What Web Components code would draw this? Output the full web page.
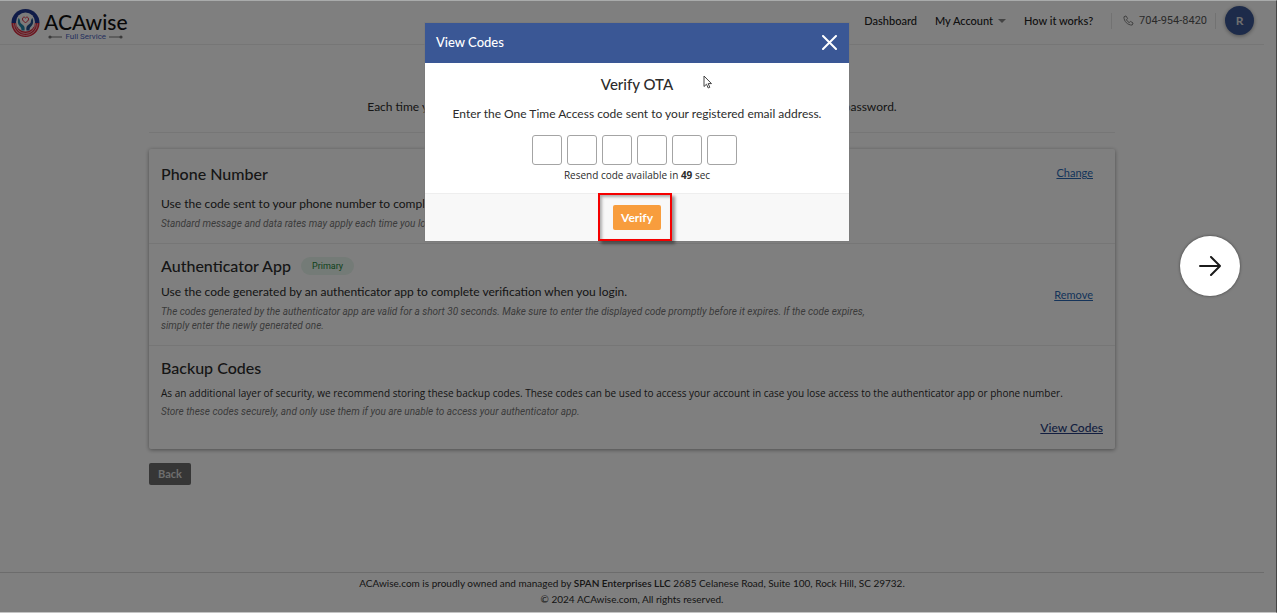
<!DOCTYPE html>
<html lang="en">
<head>
<meta charset="utf-8">
<meta name="viewport" content="width=device-width, initial-scale=1">
<title>ACAwise</title>
<style>
  body {
    --brand: #3a5795;
    --ink: #2c2c2c;
    --muted: #777;
    --line: #ececec;
    --text-font: Lato, "Open Sans", sans-serif;
    --small-font: "Open Sans", sans-serif;
    --note-font: Roboto, sans-serif;
    margin: 0;
    color: var(--ink);
    background: #fff;
    font: 12px/18px var(--text-font);
  }
</style>
</head>
<body>

<app-shell>
  <site-header></site-header>

  <account-page>
    <span slot="intro">Each time you log in, you'll need to enter a verification code along with your username and password.</span>

    <method-row heading="Phone Number" spacious>
      Use the code sent to your phone number to complete verification when you login.
      <span slot="note">Standard message and data rates may apply each time you log in.</span>
      <text-link slot="action" label="Change"></text-link>
    </method-row>

    <method-row heading="Authenticator App" badge="Primary" centered>
      Use the code generated by an authenticator app to complete verification when you login.
      <span slot="note">The codes generated by the authenticator app are valid for a short 30 seconds. Make sure to enter the displayed code promptly before it expires. If the code expires, simply enter the newly generated one.</span>
      <text-link slot="action" label="Remove"></text-link>
    </method-row>

    <method-row heading="Backup Codes" compact>
      As an additional layer of security, we recommend storing these backup codes. These codes can be used to access your account in case you lose access to the authenticator app or phone number.
      <span slot="note">Store these codes securely, and only use them if you are unable to access your authenticator app.</span>
      <text-link slot="below" label="View Codes" strong></text-link>
    </method-row>
  </account-page>

  <site-footer></site-footer>

  <modal-dialog slot="overlay" heading="View Codes">
    <otp-form></otp-form>
    <verify-button slot="footer"></verify-button>
  </modal-dialog>
  <next-button slot="overlay"></next-button>
</app-shell>

<script>
class AppShell extends HTMLElement {
  constructor() {
    super();
    this.attachShadow({ mode: 'open' });
    this.shadowRoot.innerHTML = `
      <style>
        :host {
          display: block;
          position: relative;
          box-sizing: border-box;
          min-height: 100vh;
          border: 1px solid #a9abab;
          border-left: 0;
          border-right-color: #454545;
          border-bottom-color: #c4c4c4;
        }
        .page {
          display: flex;
          flex-direction: column;
          box-sizing: border-box;
          min-height: calc(100vh - 2px);
          padding-right: 12px;
        }
        .backdrop {
          position: absolute;
          inset: 0;
          padding-right: 2px;
          background: rgba(0, 0, 0, 0.5);
        }
      </style>
      <div class="page"><slot></slot></div>
      <div class="backdrop"><slot name="overlay"></slot></div>
    `;
  }
}

class SiteLogo extends HTMLElement {
  constructor() {
    super();
    this.attachShadow({ mode: 'open' });
    this.shadowRoot.innerHTML = `
      <style>
        :host { display: block; }
        a {
          display: flex;
          align-items: center;
          gap: 4px;
          color: #111;
          text-decoration: none;
        }
        svg { display: block; }
        .words {
          display: flex;
          flex-direction: column;
          align-items: center;
          padding-top: 9px;
        }
        .name { font-size: 21px; line-height: 20px; font-weight: 500; }
        .tag {
          display: flex;
          align-items: center;
          gap: 3px;
          color: #4a5fc0;
          font: 8px/10px var(--note-font);
        }
      </style>
      <a href="#">
        <svg width="29" height="29" viewBox="0 0 58 58" aria-hidden="true">
          <circle cx="29" cy="29" r="28" fill="#f4f4f4"/>
          <path d="M1 30a28 28 0 0 1 56 0z" fill="#1f3690"/>
          <path d="M1 30a28 28 0 0 0 56 0z" fill="#d8283c"/>
          <g fill="none" stroke="#f4d8dc" stroke-width="1.5">
            <path d="M5 31a24 24 0 0 0 48 0"/>
            <path d="M9 31a20 20 0 0 0 40 0"/>
          </g>
          <circle cx="29" cy="28" r="19" fill="#f7f7f7"/>
          <path d="M15 20c3 1 3 7 4 10l6 5c2 2 3 5 2 10h-6c0-4-1-6-4-9-4-4-4-10-2-16z" fill="#2385a8"/>
          <path d="M43 20c-3 1-3 7-4 10l-6 5c-2 2-3 5-2 10h6c0-4 1-6 4-9 4-4 4-10 2-16z" fill="#25508f"/>
          <path d="M29 29c-4-2-6-4-6-7 0-4 4-5 6-2 2-3 6-2 6 2 0 3-2 5-6 7z" fill="#fff" stroke="#d8283c" stroke-width="2"/>
        </svg>
        <span class="words">
          <span class="name">ACAwise</span>
          <span class="tag">
            <svg width="14" height="4" viewBox="0 0 14 4" fill="#777"><circle cx="2" cy="2" r="1.6"/><path d="M2 1.5h12v1H2z"/></svg>
            Full Service
            <svg width="14" height="4" viewBox="0 0 14 4" fill="#777"><circle cx="12" cy="2" r="1.6"/><path d="M0 1.5h12v1H0z"/></svg>
          </span>
        </span>
      </a>
    `;
  }
}

class SiteHeader extends HTMLElement {
  constructor() {
    super();
    this.attachShadow({ mode: 'open' });
    this.shadowRoot.innerHTML = `
      <style>
        :host { display: block; }
        header {
          display: flex;
          align-items: center;
          justify-content: space-between;
          box-sizing: border-box;
          height: 44px;
          padding: 0 10px 0 11px;
          border-bottom: 1px solid var(--line);
        }
        nav { display: flex; align-items: center; gap: 18px; padding-bottom: 4px; }
        nav a { color: #222; font-size: 11px; font-weight: 500; text-decoration: none; }
        .menu { display: flex; align-items: center; gap: 5px; }
        .caret {
          border: 4px solid transparent;
          border-top-color: #888;
          border-bottom: 0;
        }
        .phone {
          display: flex;
          align-items: center;
          gap: 5px;
          height: 16px;
          padding: 0 8px 0 11px;
          border: solid #e4e4e4;
          border-width: 0 1px;
          color: #555;
          font: 11px/16px var(--note-font);
        }
        .user { display: flex; align-items: center; gap: 9px; }
        .avatar {
          width: 29px;
          height: 29px;
          padding: 0;
          border: 0;
          border-radius: 50%;
          background: var(--brand);
          box-shadow: 0 1px 4px rgba(0, 0, 0, 0.4);
          color: #ddd;
          font: bold 12px/29px var(--text-font);
        }
      </style>
      <header>
        <site-logo></site-logo>
        <nav>
          <a href="#">Dashboard</a>
          <a href="#" class="menu">My Account <span class="caret"></span></a>
          <a href="#">How it works?</a>
          <div class="user">
            <a href="tel:7049548420" class="phone">
              <svg width="11" height="11" viewBox="0 0 24 24" fill="none" stroke="#777" stroke-width="2" stroke-linejoin="round" aria-hidden="true">
                <path d="M6.5 2 2 4c0 10 8 18 18 18l2-4.500-5.500-3.500-3 2.500c-2.500-1.200-4.500-3.200-6-6L10 7.500z"/>
              </svg>
              704-954-8420
            </a>
            <button class="avatar" type="button">R</button>
          </div>
        </nav>
      </header>
    `;
  }
}

class AccountPage extends HTMLElement {
  constructor() {
    super();
    this.attachShadow({ mode: 'open' });
    this.shadowRoot.innerHTML = `
      <style>
        :host { display: block; flex: 1; }
        main {
          max-width: 966px;
          margin: 0 auto;
          padding-top: 53px;
        }
        .intro {
          margin: 0 0 16px;
          padding-bottom: 16px;
          border-bottom: 1px solid var(--line);
          text-align: center;
        }
        .card {
          padding-top: 3px;
          border-radius: 2px;
          box-shadow: 0 1px 4px rgba(0, 0, 0, 0.4);
        }
        .back {
          height: 22px;
          margin-top: 14px;
          padding: 0 9px;
          border: 0;
          border-radius: 2px;
          background: #6c6c6c;
          color: #ddd;
          font: bold 11px/22px var(--text-font);
        }
      </style>
      <main>
        <p class="intro"><slot name="intro"></slot></p>
        <div class="card"><slot></slot></div>
        <button class="back" type="button">Back</button>
      </main>
    `;
  }
}

class MethodRow extends HTMLElement {
  constructor() {
    super();
    this.attachShadow({ mode: 'open' });
    const badge = this.getAttribute('badge');
    this.shadowRoot.innerHTML = `
      <style>
        :host {
          display: flex;
          justify-content: space-between;
          padding: 12px 22px 12px 12px;
          border-bottom: 1px solid var(--line);
        }
        :host(:last-of-type) { border-bottom: 0; }
        :host([centered]) { align-items: center; }
        :host([compact]) { padding-right: 12px; }
        .info { max-width: 720px; }
        :host([compact]) .info { flex: 1; max-width: none; }
        .title { display: flex; align-items: center; gap: 10px; height: 20px; margin-bottom: 7px; }
        :host([spacious]) .title { margin-bottom: 11px; }
        h2 { margin: 0; font-size: 16px; line-height: 20px; font-weight: 500; }
        .badge {
          padding: 0 11px;
          border-radius: 9px;
          background: #e9f6ee;
          color: #1c8438;
          font: 9px/18px var(--note-font);
        }
        p { margin: 0 0 4px; }
        :host([compact]) p { font: 10px/16px var(--small-font); }
        .note {
          color: var(--muted);
          font: italic 10px/14px var(--note-font);
        }
        .below { display: flex; justify-content: flex-end; }
      </style>
      <div class="info">
        <div class="title">
          <h2>${this.getAttribute('heading')}</h2>
          ${badge ? `<span class="badge">${badge}</span>` : ''}
        </div>
        <p><slot></slot></p>
        <div class="note"><slot name="note"></slot></div>
        <div class="below"><slot name="below"></slot></div>
      </div>
      <slot name="action"></slot>
    `;
  }
}

class TextLink extends HTMLElement {
  constructor() {
    super();
    this.attachShadow({ mode: 'open' });
    this.shadowRoot.innerHTML = `
      <style>
        :host { display: block; }
        a { color: #2a68b4; font-size: 11px; line-height: 16px; text-decoration: underline; }
        :host([strong]) a { color: #263c80; font-size: 12px; line-height: 18px; font-weight: 500; }
      </style>
      <a href="#">${this.getAttribute('label')}</a>
    `;
  }
}

class SiteFooter extends HTMLElement {
  constructor() {
    super();
    this.attachShadow({ mode: 'open' });
    this.shadowRoot.innerHTML = `
      <style>
        :host { display: block; }
        footer {
          padding: 2px 0 5px;
          border-top: 1px solid #d8d8d8;
          font-size: 10px;
          line-height: 16px;
          text-align: center;
        }
        b { font-weight: 600; }
      </style>
      <footer>
        <div>ACAwise.com is proudly owned and managed by <b>SPAN Enterprises LLC</b> 2685 Celanese Road, Suite 100, Rock Hill, SC 29732.</div>
        <div>© 2024 ACAwise.com, All rights reserved.</div>
      </footer>
    `;
  }
}

class ModalDialog extends HTMLElement {
  constructor() {
    super();
    this.attachShadow({ mode: 'open' });
    this.shadowRoot.innerHTML = `
      <style>
        :host {
          display: block;
          position: relative;
          max-width: 424px;
          margin: 22px auto 0;
          background: #fff;
          outline: 1px solid rgba(120, 120, 120, 0.6);
        }
        header {
          display: flex;
          align-items: center;
          justify-content: space-between;
          box-sizing: border-box;
          height: 40px;
          padding: 0 12px 2px 11px;
          background: var(--brand);
          color: #fff;
        }
        h1 { margin: 0; font-size: 13px; line-height: 18px; font-weight: 500; }
        .close { display: flex; padding: 0; border: 0; background: none; }
        .body { padding: 11px 12px; }
        footer {
          display: flex;
          justify-content: center;
          box-sizing: border-box;
          height: 48px;
          border-top: 1px solid #eee;
          background: #f8f8f8;
        }
        .pointer { position: absolute; left: 278px; top: 52px; }
      </style>
      <header>
        <h1>${this.getAttribute('heading')}</h1>
        <button class="close" type="button" aria-label="Close">
          <svg width="15" height="15" viewBox="0 0 15 15" stroke="#fff" stroke-width="2" stroke-linecap="round"><path d="M1 1l13 13M14 1 1 14"/></svg>
        </button>
      </header>
      <div class="body"><slot></slot></div>
      <footer><slot name="footer"></slot></footer>
      <svg class="pointer" width="10" height="14" viewBox="0 0 10 14" fill="#fff" stroke="#444" stroke-linejoin="round" aria-hidden="true">
        <path d="M1 1v10.500l2.500-2.300 1.700 3.800 1.600-.7-1.600-3.700H8.500z"/>
      </svg>
    `;
  }
}

class OtpForm extends HTMLElement {
  constructor() {
    super();
    this.attachShadow({ mode: 'open' });
    const boxes = [1, 2, 3, 4, 5, 6]
      .map((n) => `<input type="text" inputmode="numeric" maxlength="1" aria-label="Digit ${n}">`)
      .join('');
    this.shadowRoot.innerHTML = `
      <style>
        :host { display: block; text-align: center; }
        h2 { margin: 0 0 11px; font-size: 15px; line-height: 20px; font-weight: 500; }
        p { margin: 0; }
        .boxes { display: flex; justify-content: center; margin: 12px 0 3px; }
        input {
          box-sizing: border-box;
          width: 30px;
          height: 30px;
          margin: 0 5px 0 0;
          padding: 0;
          border: 1px solid #a4a4a4;
          border-radius: 3px;
          background: #fff;
          text-align: center;
        }
        .resend { font: 10px/14px var(--small-font); }
      </style>
      <h2>Verify OTA</h2>
      <p>Enter the One Time Access code sent to your registered email address.</p>
      <div class="boxes">${boxes}</div>
      <p class="resend">Resend code available in <b>49</b> sec</p>
    `;
  }
}

class VerifyButton extends HTMLElement {
  constructor() {
    super();
    this.attachShadow({ mode: 'open' });
    this.shadowRoot.innerHTML = `
      <style>
        :host { display: flex; align-items: center; position: relative; }
        button {
          width: 48px;
          height: 25px;
          padding: 0;
          border: 0;
          border-radius: 2px;
          background: #f89d3d;
          color: #fff;
          font: bold 12px/25px var(--text-font);
        }
        .marker {
          position: absolute;
          inset: -1px -11px 0 -15px;
          border: 2px solid #f50000;
          box-shadow: 3px 3px 3px rgba(0, 0, 0, 0.4), inset 2px 2px 3px rgba(0, 0, 0, 0.3);
          pointer-events: none;
        }
      </style>
      <button type="button">Verify</button>
      <span class="marker"></span>
    `;
  }
}

class NextButton extends HTMLElement {
  constructor() {
    super();
    this.attachShadow({ mode: 'open' });
    this.shadowRoot.innerHTML = `
      <style>
        :host { position: absolute; right: 36px; top: 235px; }
        button {
          display: flex;
          align-items: center;
          justify-content: center;
          width: 60px;
          height: 60px;
          padding: 0;
          border: 0;
          border-radius: 50%;
          background: #fff;
          box-shadow: 0 0 3px rgba(0, 0, 0, 0.5);
        }
      </style>
      <button type="button" aria-label="Next">
        <svg width="22" height="20" viewBox="0 0 22 20" fill="none" stroke="#1b1b1b" stroke-width="2" stroke-linecap="round" stroke-linejoin="round"><path d="M1 10h20M12 1l9 9-9 9"/></svg>
      </button>
    `;
  }
}

customElements.define('app-shell', AppShell);
customElements.define('site-logo', SiteLogo);
customElements.define('site-header', SiteHeader);
customElements.define('account-page', AccountPage);
customElements.define('method-row', MethodRow);
customElements.define('text-link', TextLink);
customElements.define('site-footer', SiteFooter);
customElements.define('modal-dialog', ModalDialog);
customElements.define('otp-form', OtpForm);
customElements.define('verify-button', VerifyButton);
customElements.define('next-button', NextButton);
</script>
</body>
</html>
